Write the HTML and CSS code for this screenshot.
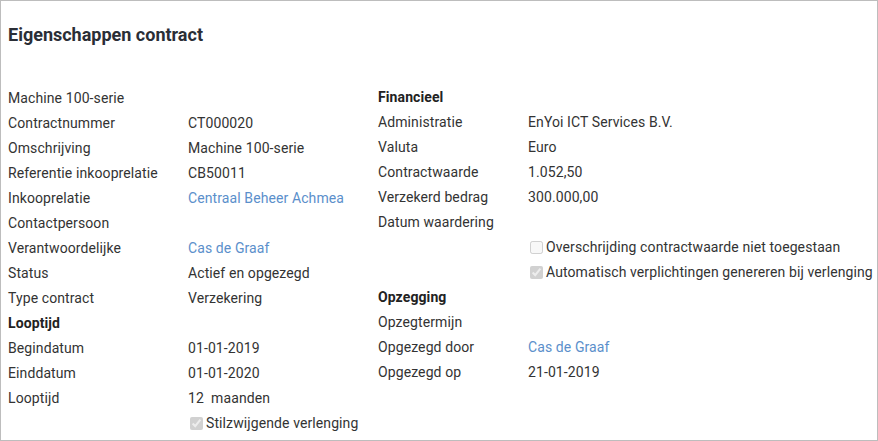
FILE: index.html
```html
<!DOCTYPE html>
<html lang="nl">
<head>
<meta charset="utf-8">
<title>Eigenschappen contract</title>
<link rel="stylesheet" href="styles.css">
</head>
<body>
<div class="panel">
  <h1 class="title">Eigenschappen contract</h1>
  <div class="columns">
    <div class="col col-left">
      <div class="row"><span class="label">Machine 100-serie</span><span class="value"></span></div>
      <div class="row"><span class="label">Contractnummer</span><span class="value">CT000020</span></div>
      <div class="row"><span class="label">Omschrijving</span><span class="value">Machine 100-serie</span></div>
      <div class="row"><span class="label">Referentie inkooprelatie</span><span class="value">CB50011</span></div>
      <div class="row"><span class="label">Inkooprelatie</span><span class="value link">Centraal Beheer Achmea</span></div>
      <div class="row"><span class="label">Contactpersoon</span><span class="value"></span></div>
      <div class="row"><span class="label">Verantwoordelijke</span><span class="value link">Cas de Graaf</span></div>
      <div class="row"><span class="label">Status</span><span class="value">Actief en opgezegd</span></div>
      <div class="row"><span class="label">Type contract</span><span class="value">Verzekering</span></div>
      <div class="row section"><span class="label">Looptijd</span><span class="value"></span></div>
      <div class="row"><span class="label">Begindatum</span><span class="value">01-01-2019</span></div>
      <div class="row"><span class="label">Einddatum</span><span class="value">01-01-2020</span></div>
      <div class="row"><span class="label">Looptijd</span><span class="value">12&nbsp; maanden</span></div>
      <div class="row"><span class="label"></span><label class="value check"><input type="checkbox" checked disabled>Stilzwijgende verlenging</label></div>
    </div>
    <div class="col col-right">
      <div class="row section"><span class="label">Financieel</span><span class="value"></span></div>
      <div class="row"><span class="label">Administratie</span><span class="value">EnYoi ICT Services B.V.</span></div>
      <div class="row"><span class="label">Valuta</span><span class="value">Euro</span></div>
      <div class="row"><span class="label">Contractwaarde</span><span class="value">1.052,50</span></div>
      <div class="row"><span class="label">Verzekerd bedrag</span><span class="value">300.000,00</span></div>
      <div class="row"><span class="label">Datum waardering</span><span class="value"></span></div>
      <div class="row"><span class="label"></span><label class="value check"><input type="checkbox" disabled>Overschrijding contractwaarde niet toegestaan</label></div>
      <div class="row"><span class="label"></span><label class="value check"><input type="checkbox" checked disabled>Automatisch verplichtingen genereren bij verlenging</label></div>
      <div class="row section"><span class="label">Opzegging</span><span class="value"></span></div>
      <div class="row"><span class="label">Opzegtermijn</span><span class="value"></span></div>
      <div class="row"><span class="label">Opgezegd door</span><span class="value link">Cas de Graaf</span></div>
      <div class="row"><span class="label">Opgezegd op</span><span class="value">21-01-2019</span></div>
    </div>
  </div>
</div>
</body>
</html>
```
FILE: styles.css
```css
html, body {
  margin: 0;
  padding: 0;
  background: #ffffff;
}
body {
  font-family: Roboto, "Liberation Sans", Arial, sans-serif;
  font-size: 14px;
  letter-spacing: 0.1px;
  color: #333333;
}
.panel {
  box-sizing: border-box;
  width: 878px;
  height: 441px;
  border: 1px solid #bdbdbd;
  padding: 0 7px;
  overflow: hidden;
}
.title {
  margin: 24px 0 0 0;
  font-size: 18px;
  line-height: 20px;
  font-weight: 700;
  letter-spacing: 0;
  color: #2a2e36;
}
.columns {
  display: flex;
  margin-top: 41px;
}
.col-left {
  width: 370px;
  flex: none;
}
.col-right {
  flex: 1;
  min-width: 0;
  margin-top: -1px;
}
.row {
  display: flex;
  height: 25px;
  line-height: 25px;
  white-space: nowrap;
}
.col-left .label {
  width: 180px;
  flex: none;
}
.col-right .label {
  width: 150px;
  flex: none;
}
.section .label {
  font-weight: 700;
  color: #222222;
}
.link {
  color: #5b8fcb;
}
.check {
  display: flex;
  align-items: center;
}
.check input {
  width: 13px;
  height: 13px;
  margin: 0 3px 0 2px;
}
```
